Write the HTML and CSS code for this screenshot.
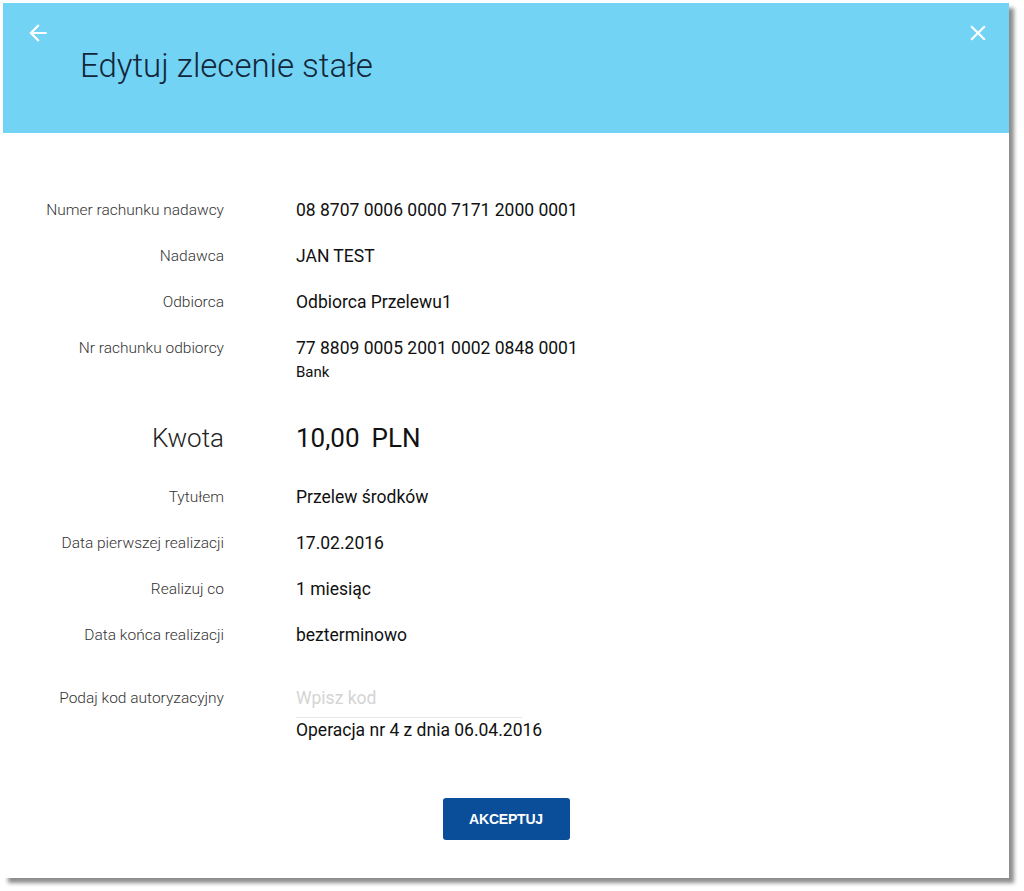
FILE: index.html
```html
<!DOCTYPE html>
<html lang="pl">
<head>
<meta charset="utf-8">
<title>Edytuj zlecenie stałe</title>
<link rel="stylesheet" href="styles.css">
</head>
<body>
<div class="panel">
  <header class="head">
    <div class="head-bar">
      <button class="icon-btn" aria-label="Wstecz">
        <svg width="26" height="26" viewBox="0 0 24 24"><path d="M20 11H7.83l5.59-5.59L12 4l-8 8 8 8 1.41-1.41L7.83 13H20v-2z" fill="#fff"/></svg>
      </button>
      <button class="icon-btn" aria-label="Zamknij">
        <svg width="26" height="26" viewBox="0 0 24 24"><path d="M19 6.41L17.59 5 12 10.59 6.41 5 5 6.41 10.59 12 5 17.59 6.41 19 12 13.41 17.59 19 19 17.59 13.41 12z" fill="#fff"/></svg>
      </button>
    </div>
    <h1 class="title">Edytuj zlecenie stałe</h1>
  </header>
  <main class="body">
    <div class="grid">
      <div class="label">Numer rachunku nadawcy</div>
      <div class="value">08 8707 0006 0000 7171 2000 0001</div>

      <div class="label">Nadawca</div>
      <div class="value">JAN TEST</div>

      <div class="label">Odbiorca</div>
      <div class="value">Odbiorca Przelewu1</div>

      <div class="label">Nr rachunku odbiorcy</div>
      <div class="value">77 8809 0005 2001 0002 0848 0001<div class="sub">Bank</div></div>

      <div class="label label-big amount">Kwota</div>
      <div class="value value-big amount"><span>10,00</span><span>PLN</span></div>

      <div class="label">Tytułem</div>
      <div class="value">Przelew środków</div>

      <div class="label">Data pierwszej realizacji</div>
      <div class="value">17.02.2016</div>

      <div class="label">Realizuj co</div>
      <div class="value">1 miesiąc</div>

      <div class="label">Data końca realizacji</div>
      <div class="value">bezterminowo</div>

      <div class="label auth">Podaj kod autoryzacyjny</div>
      <div class="value auth">
        <input class="code" type="text" placeholder="Wpisz kod">
        <div class="op">Operacja nr 4 z dnia 06.04.2016</div>
      </div>
    </div>
    <div class="actions">
      <button class="btn">AKCEPTUJ</button>
    </div>
  </main>
</div>
</body>
</html>
```

FILE: styles.css
```css
html, body {
  margin: 0;
  padding: 0;
  background: #fff;
}
body {
  padding: 3px 0 13px 3px;
  font-family: Roboto, "Liberation Sans", sans-serif;
}
.panel {
  width: 1006px;
  height: 875px;
  background: #fff;
  box-shadow: 5px 5px 4px rgba(0, 0, 0, 0.45);
  display: flex;
  flex-direction: column;
}
.head {
  background: #72d3f5;
  height: 130px;
  box-sizing: border-box;
  padding: 17px 18px 0 22px;
}
.head-bar {
  display: flex;
  justify-content: space-between;
  align-items: center;
}
.icon-btn {
  border: 0;
  background: transparent;
  padding: 0;
  width: 26px;
  height: 26px;
  display: flex;
}
.title {
  margin: -1px 0 0 55px;
  font-weight: 300;
  font-size: 33px;
  line-height: 42px;
  color: #13263a;
}
.body {
  padding-top: 65px;
  display: flex;
  flex-direction: column;
}
.grid {
  display: grid;
  grid-template-columns: 221px 1fr;
  column-gap: 72px;
  row-gap: 22px;
}
.label {
  text-align: right;
  font-size: 15.5px;
  font-weight: 300;
  line-height: 24px;
  color: #333;
}
.value {
  font-size: 17.5px;
  line-height: 24px;
  color: #111;
}
.sub {
  font-size: 15px;
  line-height: 24px;
}
.amount {
  margin-top: 16px;
  margin-bottom: 9px;
}
.auth {
  margin-top: 17px;
}
.label-big {
  font-size: 26px;
  line-height: 32px;
  color: #222;
}
.value-big {
  font-size: 26px;
  line-height: 32px;
  display: flex;
  gap: 12px;
  color: #111;
}
.code {
  display: block;
  width: 226px;
  border: 0;
  border-bottom: 1px solid #e6e6e6;
  padding: 0 0 7px;
  margin: 0;
  font-family: inherit;
  font-size: 17.5px;
  line-height: 24px;
  height: 32px;
  box-sizing: border-box;
  outline: none;
  background: transparent;
}
.code::placeholder {
  color: #d4d4d4;
}
.op {
  font-size: 17.5px;
  line-height: 24px;
}
.actions {
  display: flex;
  justify-content: center;
  margin-top: 56px;
}
.btn {
  width: 127px;
  height: 42px;
  border: 0;
  border-radius: 3px;
  background: #0a4e9a;
  color: #fff;
  font-family: "Liberation Sans", Arial, sans-serif;
  font-weight: 700;
  font-size: 14px;
  letter-spacing: -0.2px;
}
```
